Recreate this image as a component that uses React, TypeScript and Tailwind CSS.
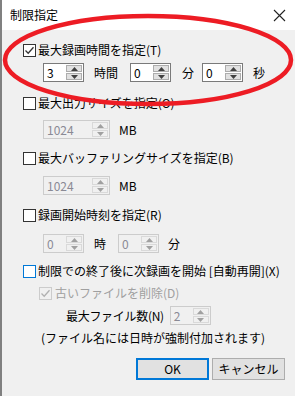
import React from 'react';

const font = { fontFamily: '"Noto Sans CJK JP", "Noto Sans", sans-serif' };

const Arrow: React.FC<{ up?: boolean; disabled?: boolean }> = ({ up, disabled }) => (
  <svg width="7" height="4" viewBox="0 0 7 4">
    <polygon points={up ? '0,4 7,4 3.5,0' : '0,0 7,0 3.5,4'} fill={disabled ? '#a0a0a0' : '#404040'} />
  </svg>
);

const Spin: React.FC<{ value: string; width: number; disabled?: boolean }> = ({ value, width, disabled }) => (
  <div
    className={`flex h-[19px] shrink-0 border ${disabled ? 'border-[#cccccc] bg-[#f0f0f0]' : 'border-[#7a7a7a] bg-white'}`}
    style={{ width }}
  >
    <div className={`flex-1 pl-[3px] text-[12px] leading-[17px] ${disabled ? 'text-[#8a8a95]' : 'text-black'}`}>{value}</div>
    <div className="flex w-[17px] flex-col gap-[1px] py-[1px] pr-[1px]">
      <div className={`flex flex-1 items-center justify-center border ${disabled ? 'border-[#d9d9d9] bg-[#f0f0f0]' : 'border-[#adadad] bg-[#e1e1e1]'}`}>
        <Arrow up disabled={disabled} />
      </div>
      <div className={`flex flex-1 items-center justify-center border ${disabled ? 'border-[#d9d9d9] bg-[#f0f0f0]' : 'border-[#adadad] bg-[#e1e1e1]'}`}>
        <Arrow disabled={disabled} />
      </div>
    </div>
  </div>
);

const Check: React.FC<{ checked?: boolean; disabled?: boolean; focus?: boolean }> = ({ checked, disabled, focus }) => {
  const box = focus
    ? 'border-[#0078d7] bg-white'
    : disabled
      ? 'border-[#cccccc] bg-[#f0f0f0]'
      : 'border-[#333333] bg-white';
  return (
    <div className={`flex h-[13px] w-[13px] shrink-0 items-center justify-center border ${box}`}>
      {checked && (
        <svg width="11" height="11" viewBox="0 0 11 11">
          <path d="M1.5 5.5 L4.2 8.2 L9.5 2.2" fill="none" stroke={disabled ? '#b0b0b0' : '#333'} strokeWidth="1.3" />
        </svg>
      )}
    </div>
  );
};

const CheckRow: React.FC<{ label: string; checked?: boolean; focus?: boolean; className?: string }> = ({
  label,
  checked,
  focus,
  className = '',
}) => (
  <div className={`flex h-[18px] items-center gap-[2px] pl-[21px] ${className}`}>
    <Check checked={checked} focus={focus} />
    <span className="whitespace-nowrap text-[12px] leading-[18px] text-black">{label}</span>
  </div>
);

const App: React.FC = () => {
  return (
    <div className="relative h-[396px] w-[295px] overflow-hidden border-l-2 border-[#808080] bg-[#f0f0f0]" style={font}>
      <div className="flex h-[30px] items-center justify-between bg-white pl-[8px] pr-[9px]">
        <span className="text-[12px] text-black">制限指定</span>
        <svg width="13" height="13" viewBox="0 0 13 13">
          <path d="M1 1 L12 12 M12 1 L1 12" stroke="#222" strokeWidth="1.1" />
        </svg>
      </div>

      <div className="flex flex-col">
        <CheckRow label="最大録画時間を指定(T)" checked className="mt-[11px]" />
        <div className="mt-[4px] flex items-center pl-[41px] text-[12px]">
          <Spin value="3" width={41} />
          <span className="ml-[10px] w-[36px]">時間</span>
          <Spin value="0" width={41} />
          <span className="ml-[11px] w-[20px]">分</span>
          <Spin value="0" width={41} />
          <span className="ml-[10px]">秒</span>
        </div>

        <CheckRow label="最大出力サイズを指定(O)" className="mt-[12px]" />
        <div className="mt-[8px] flex items-center pl-[41px] text-[12px]">
          <Spin value="1024" width={67} disabled />
          <span className="ml-[9px]">MB</span>
        </div>

        <CheckRow label="最大バッファリングサイズを指定(B)" className="mt-[10px]" />
        <div className="mt-[9px] flex items-center pl-[41px] text-[12px]">
          <Spin value="1024" width={67} disabled />
          <span className="ml-[9px]">MB</span>
        </div>

        <CheckRow label="録画開始時刻を指定(R)" className="mt-[11px]" />
        <div className="mt-[10px] flex items-center pl-[41px] text-[12px]">
          <Spin value="0" width={41} disabled />
          <span className="ml-[10px] w-[24px]">時</span>
          <Spin value="0" width={41} disabled />
          <span className="ml-[9px]">分</span>
        </div>

        <CheckRow label="制限での終了後に次録画を開始 [自動再開](X)" focus className="mt-[9px]" />
        <div className="mt-[4px] flex h-[18px] items-center gap-[3px] pl-[37px]">
          <Check checked disabled />
          <span className="whitespace-nowrap text-[12px] leading-[18px] text-[#a0a0a0]">古いファイルを削除(D)</span>
        </div>
        <div className="mt-[4px] flex items-center gap-[6px] pl-[64px] text-[12px]">
          <span className="whitespace-nowrap tracking-[-0.3px]">最大ファイル数(N)</span>
          <Spin value="2" width={41} disabled />
        </div>
        <div className="mt-[2px] whitespace-nowrap pl-[39px] text-[12px] leading-[22px]">(ファイル名には日時が強制付加されます)</div>

        <div className="mt-[9px] flex justify-end gap-[3px] pr-[10px] text-[12px]">
          <button className="h-[22px] w-[73px] border-2 border-[#0078d7] bg-[#e1e1e1] leading-[18px]">OK</button>
          <button className="h-[22px] w-[73px] border border-[#adadad] bg-[#e1e1e1] leading-[20px]">キャンセル</button>
        </div>
      </div>

      <svg className="pointer-events-none absolute left-0 top-0" width="295" height="396" viewBox="0 0 295 396">
        <ellipse cx="146" cy="60" rx="143" ry="44" fill="none" stroke="#ed1c24" strokeWidth="4.5" />
      </svg>
    </div>
  );
};

export default App;
